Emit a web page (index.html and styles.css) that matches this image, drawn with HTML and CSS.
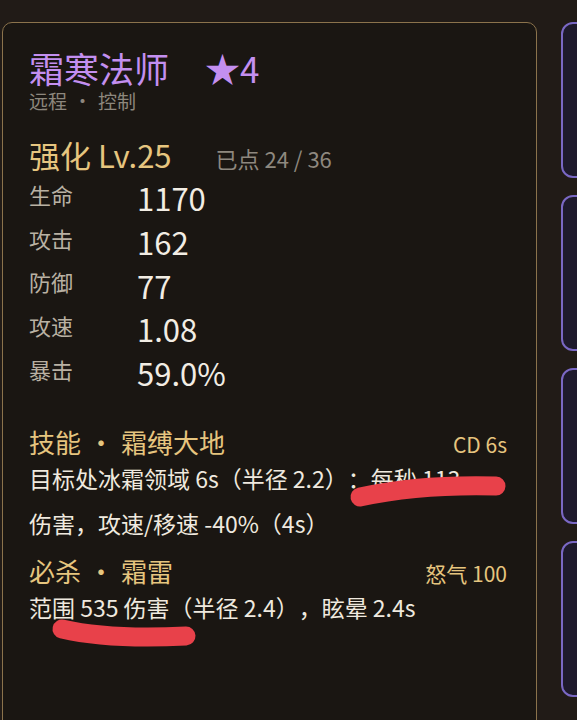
FILE: index.html
```html
<!DOCTYPE html>
<html lang="zh-CN">
<head>
    <meta charset="UTF-8">
    <meta name="viewport" content="width=device-width, initial-scale=1.0">
    <title>霜寒法师</title>
    <link rel="stylesheet" href="styles.css">
</head>
<body>
    <div class="screen">
        <section class="hero-card">
            <h1 class="hero-name">霜寒法师<span class="hero-star">★4</span></h1>
            <p class="hero-tags">远程<span class="dot">·</span>控制</p>
            <div class="hero-level">
                <span class="level">强化 Lv.25</span>
                <span class="points">已点 24 / 36</span>
            </div>

            <div class="stats">
                <span class="stat-label">生命</span><span class="stat-value">1170</span>
                <span class="stat-label">攻击</span><span class="stat-value">162</span>
                <span class="stat-label">防御</span><span class="stat-value">77</span>
                <span class="stat-label">攻速</span><span class="stat-value">1.08</span>
                <span class="stat-label">暴击</span><span class="stat-value">59.0%</span>
            </div>

            <div class="skill">
                <div class="skill-head">
                    <span class="skill-name">技能<span class="dot">·</span>霜缚大地</span>
                    <span class="skill-cost">CD 6s</span>
                </div>
                <p class="skill-desc">目标处冰霜领域 6s（半径 2.2）：每秒 113<br>伤害，攻速/移速 -40%（4s）</p>
            </div>

            <div class="skill">
                <div class="skill-head">
                    <span class="skill-name">必杀<span class="dot">·</span>霜雷</span>
                    <span class="skill-cost">怒气 100</span>
                </div>
                <p class="skill-desc">范围 535 伤害（半径 2.4），眩晕 2.4s</p>
            </div>
        </section>

        <aside class="side-list">
            <div class="side-card"></div>
            <div class="side-card"></div>
            <div class="side-card"></div>
            <div class="side-card"></div>
        </aside>
    </div>

    <!-- hand-drawn marks on top of the screenshot -->
    <svg class="marks" width="577" height="720" viewBox="0 0 577 720">
        <path d="M360 497 Q 420 484 496 486" />
        <path d="M62 629 Q 110 640 186 636" />
    </svg>
</body>
</html>
```

FILE: styles.css
```css
html, body { margin: 0; height: 100%; }
body { background-color: #211b17; font-family: "Noto Sans CJK SC", "Noto Sans", sans-serif; overflow: hidden; position: relative; text-spacing-trim: space-all; }
.screen { display: flex; gap: 24px; padding: 22px 0 0 2px; }

.hero-card { width: 535px; height: 720px; box-sizing: border-box; flex-shrink: 0; padding: 26px 29px 0 26px; background-color: #1a1612; border: 1px solid #8b734c; border-radius: 10px; }
.hero-name { margin: 0; font-size: 35px; font-weight: 400; line-height: 38px; color: #c38ff0; }
.hero-star { margin-left: 36px; }
.hero-tags { margin: 2px 0 0; font-size: 19px; line-height: 24px; color: #8d877d; }
.dot { margin: 0 6px; }
.hero-level { display: flex; align-items: baseline; gap: 44px; margin-top: 22px; line-height: 40px; }
.level { font-size: 31px; color: #e6c57f; }
.points { font-size: 22px; color: #8e887f; }

.stats { display: grid; grid-template-columns: 108px auto; grid-auto-rows: 43.7px; align-items: center; margin-top: -6px; }
.stat-label { font-size: 22px; color: #b9b1a3; }
.stat-value { font-size: 31px; color: #f2ede4; padding-top: 8px; }

.skill { margin-top: 37px; }
.skill + .skill { margin-top: 10px; }
.skill-head { display: flex; justify-content: space-between; align-items: baseline; line-height: 30px; }
.skill-name { font-size: 26px; color: #e6c57f; }
.skill-name .dot { margin: 0 7px; }
.skill-cost { font-size: 21px; color: #e6c57f; }
.skill-desc { margin: -3px 0 0; font-size: 23px; line-height: 45px; color: #efe9df; }

.side-list { display: flex; flex-direction: column; gap: 17px; }
.side-card { width: 60px; height: 156px; box-sizing: border-box; background-color: #1e1a2c; border: 2.5px solid #7a68c4; border-radius: 12px; }

.marks { position: absolute; left: 0; top: 0; pointer-events: none; filter: blur(0.6px); }
.marks path { fill: none; stroke: #e8414a; stroke-width: 19px; stroke-linecap: round; }
```
